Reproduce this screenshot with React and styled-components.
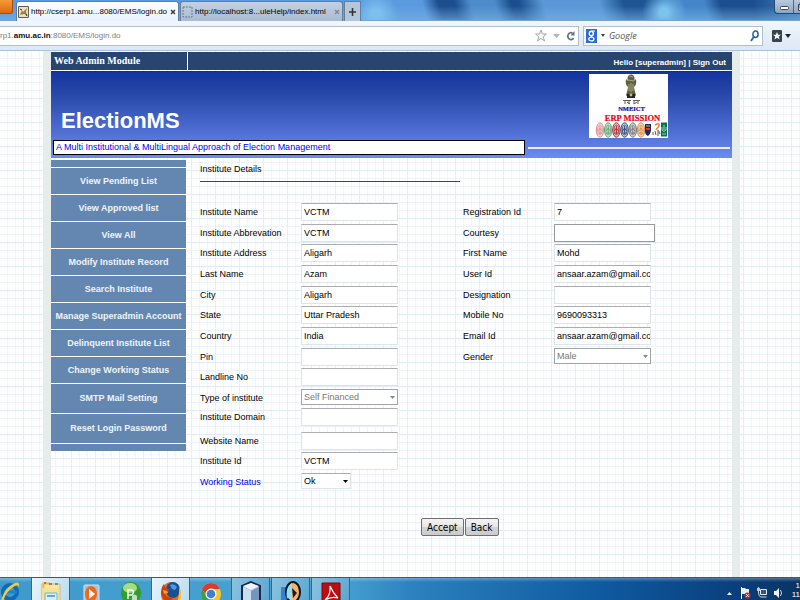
import React from "react";
import styled, { createGlobalStyle, css } from "styled-components";

const sans = '"Liberation Sans", Arial, sans-serif';

const Global = createGlobalStyle`
  *, *::before, *::after { box-sizing: border-box; }
  body { margin: 0; background: #fff; font-family: ${sans}; font-size: 9px; color: #000; }
  button, input, select { font: inherit; color: inherit; margin: 0; }
`;

const Screen = styled.div`
  display: flex;
  flex-direction: column;
  height: 100vh;
  overflow: hidden;
`;

/* ---------- browser window ---------- */

const TitleBar = styled.header`
  display: flex;
  flex: none;
  height: 21px;
  font-size: 8px;
  border-bottom: 1px solid #7aa2c8;
  background:
    radial-gradient(circle at 83% 60%, #7cc4f0 0 4px, transparent 22px),
    radial-gradient(circle at 47% 70%, #7cc0ef 0 4px, transparent 22px),
    linear-gradient(to bottom, transparent 30%, rgba(120, 180, 230, 0.6)),
    linear-gradient(75deg, transparent 53%, #1c4e8e 55% 57%, #4d8bcb 59% 62%, #1c4e8e 64% 65%, #5b97d6 68% 75%, #1e5494 78% 82%, #4386c9 85% 88%, #1c4e8e 90% 94%, #3f7fbf),
    #5b9ade;
`;

const AppButton = styled.button`
  width: 13px;
  height: 14px;
  margin-right: 3px;
  padding: 0;
  border: 1px solid #a94c10;
  border-width: 0 1px 1px 0;
  border-radius: 0 0 3px 0;
  background: linear-gradient(#f39a3a, #e06a08);
`;

const Tab = styled.div`
  display: flex;
  align-items: center;
  gap: 2px;
  width: 163px;
  height: 20px;
  margin: 1px 1px 0 0;
  padding: 0 1px;
  white-space: nowrap;
  border: 1px solid #5f7fa3;
  border-bottom: 0;
  border-radius: 3px 3px 0 0;
  background: ${(p) => (p.$active ? "linear-gradient(#fdfeff, #e9f2fb)" : "linear-gradient(#c3d0e0, #a8bcd4)")};
`;

const TabTitle = styled.span`
  flex: 1;
`;

const TabButton = styled.button`
  display: grid;
  place-items: center;
  width: ${(p) => p.$width || 8}px;
  padding: 0;
  border: 0;
  background: none;
`;

const NewTab = styled(TabButton)`
  height: 20px;
  margin-top: 1px;
  border: 1px solid #5f7fa3;
  border-bottom: 0;
  background: #b4c6da;
`;

const WindowButtons = styled.div`
  display: flex;
  height: 14px;
  width: 26px;
  margin-left: auto;
  overflow: hidden;
  border: 1px solid #26486f;
  border-width: 0 0 1px 1px;
  border-radius: 0 0 0 4px;
  background: linear-gradient(#b9cbdc, #8ba6c2);
`;

const WindowButton = styled.button`
  flex: none;
  width: 19px;
  height: 13px;
  padding: 0;
  border: 0;
  border-right: 1px solid #4a6788;
  background: none;
  svg { display: block; }
`;

const NavBar = styled.nav`
  display: flex;
  flex: none;
  align-items: center;
  gap: 4px;
  height: 30px;
  border-bottom: 1px solid #a9c3df;
  background: linear-gradient(#f0f6fc, #dbe8f5);
`;

const FieldBox = styled.div`
  display: flex;
  align-items: center;
  gap: 4px;
  height: 20px;
  background: #fff;
  border: 1px solid #b3bfcc;
`;

const Address = styled(FieldBox)`
  flex: 1;
  gap: 6px;
  padding-right: 3px;
  border-left: 0;
  color: #808080;
`;

const Url = styled.div`
  flex: 1;
  font-size: 8px;
  b { color: #111; }
`;

const SearchBox = styled(FieldBox)`
  width: 180px;
  padding: 0 3px 0 2px;
`;

const SearchInput = styled.input`
  flex: 1;
  min-width: 0;
  padding: 0;
  border: 0;
  outline: 0;
  font-family: "Open Sans", sans-serif;
  background: none;
  &::placeholder { color: #555; font-style: italic; opacity: 1; }
`;

const IconButton = styled.button`
  display: grid;
  flex: none;
  padding: 0;
  border: 0;
  background: none;
`;

const Bookmark = styled(IconButton)`
  width: 33px;
  padding-left: 4px;
`;

/* ---------- web page ---------- */

const Page = styled.main`
  flex: 1;
  min-height: 0;
  overflow: hidden;
  background:
    repeating-linear-gradient(to right, transparent 0 23px, #e6eefa 23px 24px),
    repeating-linear-gradient(to bottom, transparent 0 23px, #e0eafa 23px 24px),
    repeating-linear-gradient(to right, transparent 0 7px, #f0f4fc 7px 8px),
    repeating-linear-gradient(to bottom, transparent 0 7px, #ecf2fc 7px 8px),
    #fff;
`;

const Sheet = styled.div`
  min-height: 100%;
  margin: 0 60px 0 43px;
  padding-top: 1px;
  border: solid #e6ecea;
  border-width: 0 8px;
`;

const TopBar = styled.div`
  display: flex;
  align-items: center;
  height: 18px;
  font-weight: bold;
  color: #fff;
  background: #28456f;
`;

const ModuleName = styled.div`
  width: 137px;
  height: 18px;
  padding-left: 3px;
  font: bold 10px/18px "Liberation Serif", serif;
  border-right: 1px solid #fff;
`;

const Greeting = styled.div`
  margin-left: auto;
  padding: 2px 6px 0 0;
  font-size: 8px;
  a { color: inherit; text-decoration: none; }
`;

const Banner = styled.section`
  display: flex;
  flex-direction: column;
  height: 87px;
  margin-top: 1px;
  padding: 2px 2px 2px;
  background: linear-gradient(#1434a0, #2747a8 25%, #4765cb 60%, #6b8cf2);
  border-top: 1px solid #102d8c;
`;

const BannerTop = styled.div`
  display: flex;
  justify-content: space-between;
  align-items: flex-start;
  height: 66px;
  padding: 0 62px 0 8px;
`;

const Brand = styled.h1`
  align-self: flex-end;
  margin: 0;
  padding-bottom: 3px;
  color: #fff;
  font-size: 22px;
  line-height: 32px;
`;

const Logo = styled.svg`
  display: block;
  background: #fff;
`;

const BannerBottom = styled.div`
  display: flex;
  align-items: center;
  gap: 3px;
`;

const Tagline = styled.p`
  flex: 0 1 472px;
  margin: 0;
  padding-left: 2px;
  font-size: 9px;
  line-height: 13px;
  color: #00f;
  background: #fff;
  border: 1px solid #000;
`;

const Stripe = styled.span`
  flex: 1;
  height: 2px;
  background: #e8eefc;
`;

const Body = styled.div`
  display: flex;
  align-items: flex-start;
  gap: 13px;
`;

const Sidebar = styled.nav`
  display: flex;
  flex: none;
  flex-direction: column;
  gap: 1px;
  width: 136px;
  margin-top: 2px;
  padding-right: 1px;
  background: #fff;
`;

const Cap = styled.div`
  height: 7px;
  background: #6487b1;
`;

const MenuLink = styled.a`
  height: ${(p) => (p.$tall ? 29 : 26)}px;
  line-height: ${(p) => (p.$tall ? 29 : 26)}px;
  color: #eef4fb;
  font-weight: bold;
  text-align: center;
  text-decoration: none;
  white-space: nowrap;
  background: #6487b1;
`;

const Form = styled.form`
  flex: 1;
`;

const Legend = styled.h2`
  width: 260px;
  margin: 0 0 21px;
  padding: 2px 0 3px;
  font-size: 9px;
  font-weight: normal;
  line-height: 18px;
  border-bottom: 1px solid #444;
`;

const Columns = styled.div`
  display: flex;
  align-items: flex-start;
  gap: 65px;
`;

const Fields = styled.div`
  display: grid;
  grid-template-columns: ${(p) => (p.$wide ? "101px" : "91px")} auto;
  grid-template-rows: repeat(3, 21px 20px 21px) 19px 24px 20px 21px 21px;
  align-items: start;
  justify-items: start;
`;

const FieldLabel = styled.label`
  line-height: 18px;
  white-space: nowrap;
  color: ${(p) => (p.$link ? "#0000f0" : "#000")};
`;

const control = css`
  height: 18px;
  width: ${(p) => p.$width || 97}px;
  padding: 0 0 0 2px;
  border: 1px solid #dfe3ea;
  border-top-color: #abadb3;
  background: #fff;
`;

const TextInput = styled.input`
  ${control}
  ${(p) => p.$outlined && "border-color: #9a9a9a;"}
`;

const SelectWrap = styled.div`
  display: grid;
  align-items: center;
  justify-items: end;
  svg { grid-area: 1 / 1; margin-right: 3px; pointer-events: none; z-index: 1; }
`;

const Select = styled.select`
  ${control}
  grid-area: 1 / 1;
  height: 16px;
  appearance: none;
  opacity: 1;
  color: #000;
  &:disabled { color: #777; border-color: #a4a4a4; }
`;

const Actions = styled.div`
  display: flex;
  gap: 1px;
  margin: 24px 0 0 221px;
`;

const PushButton = styled.button`
  height: 18px;
  padding: 0 5px;
  font-family: "DejaVu Sans Condensed", "DejaVu Sans", sans-serif;
  font-size: 10px;
  border: 1px solid #707070;
  border-radius: 2px;
  background: linear-gradient(#f4f4f4, #e6e6e6 50%, #d4d4d4 50%, #cbcbcb);
`;

/* ---------- task bar ---------- */

const TaskBar = styled.footer`
  display: flex;
  flex: none;
  gap: 1px;
  height: 23px;
  overflow: hidden;
  border-top: 1px solid #40586e;
  background:
    linear-gradient(rgba(255, 255, 255, 0.3), transparent 4px),
    linear-gradient(to right, #3f9acb, #49a3d3 42%, #2b80bd 52%, #0f5aa0 75%, #0a3f7d 92%, #083463);
`;

const TaskButton = styled.button`
  flex: none;
  width: ${(p) => (p.$first ? 30 : 39)}px;
  height: 30px;
  padding: ${(p) => (p.$first ? "1px 0 0" : "2px 0 0 8px")};
  border: 1px solid ${(p) => (p.$open ? "#2d6a92" : "transparent")};
  border-top: 0;
  background: ${(p) =>
    p.$lit
      ? "linear-gradient(110deg, #e7f4fb, #b9dcef)"
      : p.$open
        ? "linear-gradient(110deg, #8cc3e0, #5ba5cf)"
        : "none"};
  svg { display: block; }
`;

const Tray = styled.div`
  display: flex;
  gap: 6px;
  width: 77px;
  margin-left: auto;
  padding-top: 9px;
  svg { flex: none; }
`;

const Clock = styled.div`
  flex: 1;
  margin: -6px 0 0 -3px;
  font-size: 8px;
  line-height: 9px;
  text-align: right;
  color: #fff;
`;

const Arrow = ({ color, small }) => (
  <svg width={small ? 5 : 7} height={small ? 3 : 4} viewBox="0 0 7 4" aria-hidden="true">
    <path d="M0 0h7L3.500 4z" fill={color} />
  </svg>
);

const Cross = ({ color }) => (
  <svg width="6" height="6" viewBox="0 0 6 6" aria-hidden="true">
    <path d="M1 1l4 4M5 1L1 5" stroke={color} strokeWidth="1.300" />
  </svg>
);

const seals = ["#dc8f90", "#60a573", "#ad3438", "#394e79", "#797979", "#dd8e42"];

const MissionLogo = () => (
  <Logo width="79" height="64" viewBox="0 0 79 64" role="img" aria-label="NMEICT ERP Mission">
    <g fill="#62613f">
      <ellipse cx="42" cy="5" rx="3.500" ry="4.500" />
      <path d="M37 5q-1 6 2 8l-1 5h8l-1-5q3-2 2-8l-3 3h-4zM38 18h8l1 3-2 3h-6l-2-3z" />
    </g>
    <path d="M40 2l4 1M39 6l6 1M40 10v7M42 9v9M44 10v7" stroke="#c8c4a0" strokeWidth="0.700" />
    <path d="M38 20h8v4h-8z" fill="#24251a" />
    <circle cx="42" cy="21" r="1.400" fill="#bdb995" />
    <path d="M34 26.500h8M44 26.500h7M36 27v3M38 28l3 2M40 27v3M45 27v3l3-2M49 27v3" stroke="#333" strokeWidth="0.800" fill="none" />
    <text x="42.500" y="37" textAnchor="middle" fontFamily="Liberation Serif, serif" fontWeight="bold" fontSize="6.500" fill="#12129a" stroke="#12129a" strokeWidth="0.200">NMEICT</text>
    <text x="43.500" y="46.500" textAnchor="middle" fontFamily="Liberation Serif, serif" fontWeight="bold" fontSize="8.500" fill="#f00012" stroke="#f00012" strokeWidth="0.200">ERP MISSION</text>
    {seals.map((c, i) => (
      <g key={c} transform={`translate(${11 + i * 8.2} 56)`} fill="none" stroke={c}>
        <ellipse rx="3.700" ry="7.200" fill={c} fillOpacity="0.300" />
        <ellipse rx="2.300" ry="4.800" strokeWidth="0.800" />
        <path d="M0-4v8M-2 1L0-2l2 3M-2 3h4" />
      </g>
    ))}
    <path d="M56 50h6v7q-1 4-3 5-3-1-3-5z" fill="#22265f" />
    <path d="M57 55h4" stroke="#e03a2a" strokeWidth="2" />
    <path d="M57 52h4" stroke="#d9b238" />
    <path d="M66 51q5-3 4 1l-3 4" stroke="#f07c3a" strokeWidth="1.500" fill="none" />
    <path d="M64 58v3M66 57l1 4M69 57v5" stroke="#556" />
    <path d="M69 56l2 4" stroke="#46a45b" strokeWidth="1.500" />
    <path d="M72 48.500h6v14h-6z" fill="#08744c" />
    <path d="M73 53v3q2 3 4 0v-3M75 51v5M73 60h4" stroke="#d2eadf" fill="none" strokeWidth="0.800" />
  </Logo>
);

const icons = {
  ie: (
    <svg width="20" height="26" viewBox="0 0 20 26">
      <circle cx="9" cy="12" r="7" fill="none" stroke="#116ab4" strokeWidth="4" />
      <path d="M3 12h13" stroke="#1b83cd" strokeWidth="3" />
      <path d="M0 21Q3 8 14 3q5-2 4 4-1-4-7 1Q4 13 2 22z" fill="#f5ca3b" />
    </svg>
  ),
  folder: (
    <svg width="22" height="26" viewBox="0 0 22 26">
      <path d="M1 3l2-2h6l2 2h9v20H1z" fill="#e9ca72" />
      <path d="M4 3h16v20H4z" fill="#f7e7a6" stroke="#c5a34d" strokeWidth="0.600" />
      <path d="M2 7h17v16H2z" fill="#f7e294" />
      <path d="M5 12h12v12H5z" fill="#d8eefa" stroke="#6eb3dc" />
      <path d="M7 15h8" stroke="#3b8ec9" strokeWidth="1.500" />
      <path d="M4 2h2M9 3h3" stroke="#cf3f32" strokeWidth="1.500" />
      <path d="M15 3h3" stroke="#3c7ad0" strokeWidth="1.500" />
    </svg>
  ),
  player: (
    <svg width="22" height="26" viewBox="0 0 22 26">
      <rect x="4" y="4" width="15" height="20" rx="1" fill="#9fc5dd" stroke="#d0e4ef" />
      <ellipse cx="11" cy="13" rx="6" ry="8" fill="#ee681d" />
      <path d="M9 8l6 5-6 5z" fill="#fff" />
    </svg>
  ),
  green: (
    <svg width="22" height="26" viewBox="0 0 22 26">
      <ellipse cx="11" cy="12" rx="10" ry="11" fill="#2f9d33" />
      <ellipse cx="10" cy="7" rx="7" ry="5" fill="#a9db82" />
      <path d="M8 18V9h4q3 2 0 5H8" fill="none" stroke="#f3fbf0" strokeWidth="1.500" />
      <path d="M12 15q3-3 5 0v4h-5z" fill="#c8dcc2" />
    </svg>
  ),
  firefox: (
    <svg width="22" height="26" viewBox="0 0 22 26">
      <ellipse cx="11" cy="13" rx="10" ry="12" fill="#e46a12" />
      <ellipse cx="13" cy="9" rx="7" ry="8" fill="#1a4f96" />
      <path d="M10 4q4-2 7 2l-2 3-3-1z" fill="#4a9bdd" />
      <path d="M19 5q4 9 0 18l-4 3q5-9 4-21z" fill="#f7c52e" />
      <path d="M1 13Q1 6 4 3l1 4 4 1-1 4-3 1q2 5 8 3-2 6-8 4z" fill="#c9400c" />
      <path d="M3 9l4 1 1 2-4 1z" fill="#f5a12f" />
    </svg>
  ),
  chrome: (
    <svg width="22" height="26" viewBox="0 0 22 26">
      <ellipse cx="11" cy="13" rx="10" ry="11" fill="#f4c827" />
      <path d="M2 8Q5 2 11 2t9 6h-9l-5 6z" fill="#d93b30" />
      <path d="M2 8Q0 13 2 18q3 5 8 6l3-6-6-2z" fill="#36a14a" />
      <circle cx="11" cy="13" r="5.500" fill="#fff" />
      <circle cx="11" cy="13" r="4.300" fill="#3f7fd0" />
    </svg>
  ),
  cube: (
    <svg width="22" height="26" viewBox="0 0 22 26">
      <path d="M2 5l9-4 9 4v16l-9 5-9-5z" fill="#a8c5e5" stroke="#1a2750" strokeWidth="2" />
      <path d="M3 6l8 4v15l-8-4z" fill="#c8def1" />
      <path d="M19 6l-8 4v15l8-4z" fill="#7595be" />
      <path d="M3 5l8-3 8 3-8 4z" fill="#edf5fc" />
    </svg>
  ),
  lens: (
    <svg width="22" height="26" viewBox="0 0 22 26">
      <path d="M1 6h8v18H1z" fill="#3185d0" />
      <ellipse cx="13" cy="11" rx="7" ry="10" fill="#f2b272" stroke="#10141b" strokeWidth="2" />
      <path d="M12 2q-7 5-5 15l5 3z" fill="#8fe0f5" />
      <path d="M12 7l5 5-4 5z" fill="#2b1711" />
      <path d="M4 22l5-4" stroke="#10141b" strokeWidth="2" />
    </svg>
  ),
  acrobat: (
    <svg width="22" height="26" viewBox="0 0 22 26">
      <path d="M2 2h18v24H2z" fill="#b90f12" stroke="#7e090b" />
      <path d="M10 5q3 7 8 12-6-2-13 2 6-5 5-14z" fill="none" stroke="#fff" strokeWidth="1.200" />
    </svg>
  ),
};

const tasks = [
  { id: "ie", label: "Internet Explorer", first: true },
  { id: "folder", label: "Windows Explorer", open: true, lit: true },
  { id: "player", label: "Media Player" },
  { id: "green", label: "Messenger" },
  { id: "firefox", label: "Firefox", open: true, lit: true },
  { id: "chrome", label: "Chrome" },
  { id: "cube", label: "VirtualBox", open: true },
  { id: "lens", label: "Image Viewer", open: true },
  { id: "acrobat", label: "Acrobat", open: true },
];

const menu = [
  "View Pending List",
  "View Approved list",
  "View All",
  "Modify Institute Record",
  "Search Institute",
  "Manage Superadmin Account",
  "Delinquent Institute List",
  "Change Working Status",
  "SMTP Mail Setting",
  "Reset Login Password",
];

const left = [
  { label: "Institute Name", value: "VCTM" },
  { label: "Institute Abbrevation", value: "VCTM" },
  { label: "Institute Address", value: "Aligarh" },
  { label: "Last Name", value: "Azam" },
  { label: "City", value: "Aligarh" },
  { label: "State", value: "Uttar Pradesh" },
  { label: "Country", value: "India" },
  { label: "Pin", value: "" },
  { label: "Landline No", value: "" },
  { label: "Type of institute", value: "Self Financed", select: true, disabled: true },
  { label: "Institute Domain", value: "" },
  { label: "Website Name", value: "" },
  { label: "Institute Id", value: "VCTM" },
  { label: "Working Status", value: "Ok", select: true, width: 50, link: true },
];

const right = [
  { label: "Registration Id", value: "7" },
  { label: "Courtesy", value: "", width: 101, outlined: true },
  { label: "First Name", value: "Mohd" },
  { label: "User Id", value: "ansaar.azam@gmail.co" },
  { label: "Designation", value: "" },
  { label: "Mobile No", value: "9690093313" },
  { label: "Email Id", value: "ansaar.azam@gmail.co" },
  { label: "Gender", value: "Male", select: true, disabled: true },
];

const Field = ({ label, value, select, disabled, width, outlined, link }) => {
  const id = label.toLowerCase().replace(/ /g, "-");
  return (
    <>
      <FieldLabel htmlFor={id} $link={link}>{label}</FieldLabel>
      {select ? (
        <SelectWrap>
          <Select id={id} disabled={disabled} $width={width} defaultValue={value}>
            <option>{value}</option>
          </Select>
          <Arrow small color={disabled ? "#888" : "#000"} />
        </SelectWrap>
      ) : (
        <TextInput id={id} defaultValue={value} $width={width} $outlined={outlined} />
      )}
    </>
  );
};

export default function App() {
  return (
    <Screen>
      <Global />
      <TitleBar>
        <AppButton aria-label="Firefox menu" />
        <Tab $active>
          <svg width="11" height="12" viewBox="0 0 11 12" aria-hidden="true">
            <path d="M.5.5h10v11H.5z" fill="#e9e3d0" stroke="#5b5b52" />
            <path d="M2 9l2-5 1 2 4-4-1 4 1 3-3-1z" fill="#a87e26" />
            <path d="M2 3l2 1M8 8l1 2" stroke="#222" />
          </svg>
          <TabTitle>http://cserp1.amu...8080/EMS/login.do</TabTitle>
          <TabButton aria-label="Close tab"><Cross color="#333" /></TabButton>
        </Tab>
        <Tab>
          <svg width="11" height="12" viewBox="0 0 11 12" aria-hidden="true">
            <path d="M1 1h9v10H1z" fill="none" stroke="#69788a" strokeDasharray="2 1" />
          </svg>
          <TabTitle>http://localhost:8...uleHelp/index.html</TabTitle>
          <TabButton aria-label="Close tab"><Cross color="#7b8796" /></TabButton>
        </Tab>
        <NewTab $width={17} aria-label="New tab">
          <svg width="7" height="8" viewBox="0 0 7 8"><path d="M3.500 0v8M0 4h7" stroke="#333" strokeWidth="1.500" /></svg>
        </NewTab>
        <WindowButtons>
          <WindowButton aria-label="Minimize">
            <svg width="18" height="13" viewBox="0 0 18 13"><rect x="5.500" y="6.500" width="8" height="3" rx="1" fill="#fff" stroke="#445" /></svg>
          </WindowButton>
          <WindowButton aria-label="Restore">
            <svg width="18" height="13" viewBox="0 0 18 13"><path d="M6 2.500h8v6H6zM4.500 4.500h7v6h-7z" fill="#fff" stroke="#445" /></svg>
          </WindowButton>
        </WindowButtons>
      </TitleBar>

      <NavBar>
        <Address>
          <Url role="textbox" aria-label="Address">rp1.<b>amu.ac.in</b>:8080/EMS/login.do</Url>
          <IconButton aria-label="Bookmark this page">
            <svg width="12" height="13" viewBox="0 0 12 13"><path d="M6 1l1.500 4h3.900L8.200 7.700 9.500 12 6 9.400 2.500 12l1.300-4.300L.6 5h3.900z" fill="#fafafa" stroke="#a2a7ac" /></svg>
          </IconButton>
          <Arrow color="#b1b6bd" />
          <IconButton aria-label="Reload">
            <svg width="9" height="11" viewBox="0 0 9 11"><path d="M6.500 3.200A3 3.500 0 1 0 7.500 8" fill="none" stroke="#65717f" strokeWidth="1.700" /><path d="M8.500 1v4.500H4.500z" fill="#65717f" /></svg>
          </IconButton>
        </Address>
        <SearchBox>
          <svg width="11" height="14" viewBox="0 0 11 14" aria-hidden="true">
            <rect width="11" height="14" fill="#2a6ae0" />
            <ellipse cx="5.300" cy="4.500" rx="2" ry="2.200" fill="none" stroke="#fff" strokeWidth="1.400" />
            <ellipse cx="5.300" cy="10" rx="2.600" ry="1.900" fill="none" stroke="#fff" strokeWidth="1.300" />
            <path d="M6 2h3M5 6.500l1 2" stroke="#fff" />
          </svg>
          <svg width="4" height="3" viewBox="0 0 4 3" aria-hidden="true"><path d="M0 0h4L2 3z" fill="#444" /></svg>
          <SearchInput placeholder="Google" aria-label="Search with Google" />
          <IconButton aria-label="Search">
            <svg width="9" height="12" viewBox="0 0 9 12"><ellipse cx="5.500" cy="4.200" rx="2.600" ry="3.200" fill="none" stroke="#2464a4" strokeWidth="1.500" /><path d="M3.800 6.800L1 11" stroke="#2464a4" strokeWidth="1.800" /></svg>
          </IconButton>
        </SearchBox>
        <Bookmark aria-label="Bookmarks">
          <svg width="20" height="12" viewBox="0 0 20 12">
            <rect x="1" width="10" height="12" rx="1" fill="#37434f" />
            <path d="M6 2l1.100 2.700H10L7.700 6.500l.9 3L6 7.800 3.400 9.500l.9-3L2 4.700h2.900z" fill="#fff" />
            <path d="M14 4h6l-3 4z" fill="#222" />
          </svg>
        </Bookmark>
      </NavBar>

      <Page>
        <Sheet>
          <TopBar>
            <ModuleName>Web Admin Module</ModuleName>
            <Greeting>Hello [superadmin] | <a href="#signout">Sign Out</a></Greeting>
          </TopBar>
          <Banner>
            <BannerTop>
              <Brand>ElectionMS</Brand>
              <MissionLogo />
            </BannerTop>
            <BannerBottom>
              <Tagline>A Multi Institutional &amp; MultiLingual Approach of Election Management</Tagline>
              <Stripe />
            </BannerBottom>
          </Banner>
          <Body>
            <Sidebar>
              <Cap />
              {menu.map((name, i) => (
                <MenuLink key={name} href="#menu" $tall={i > 7}>{name}</MenuLink>
              ))}
              <Cap />
            </Sidebar>
            <Form>
              <Legend>Institute Details</Legend>
              <Columns>
                <Fields $wide>{left.map((f) => <Field key={f.label} {...f} />)}</Fields>
                <Fields>{right.map((f) => <Field key={f.label} {...f} />)}</Fields>
              </Columns>
              <Actions>
                <PushButton type="button">Accept</PushButton>
                <PushButton type="button">Back</PushButton>
              </Actions>
            </Form>
          </Body>
        </Sheet>
      </Page>

      <TaskBar>
        {tasks.map((t) => (
          <TaskButton key={t.id} aria-label={t.label} $first={t.first} $open={t.open} $lit={t.lit}>
            {icons[t.id]}
          </TaskButton>
        ))}
        <Tray>
          <svg width="11" height="11" viewBox="0 0 11 11" aria-hidden="true"><path d="M4 6h5L6.500 3z" transform="translate(0 2)" fill="#eef" /></svg>
          <svg width="11" height="12" viewBox="0 0 11 12" aria-hidden="true">
            <path d="M1.500 0v12" stroke="#fff" /><path d="M2 1h3l1 1h3v5H2z" fill="#e8ebef" />
            <circle cx="7.500" cy="8.500" r="3" fill="#d7261f" /><path d="M6.300 7.300l2.400 2.400M8.700 7.300L6.300 9.700" stroke="#fff" />
          </svg>
          <svg width="11" height="12" viewBox="0 0 11 12" aria-hidden="true">
            <path d="M3.500 2.500h6v5h-6z" fill="#31557e" stroke="#e6ebf0" /><path d="M1.500 0v5q0 4 2 5h6" fill="none" stroke="#cdd5dc" /><path d="M0 1h3v3H0z" fill="#ccc8a8" />
          </svg>
          <svg width="9" height="12" viewBox="0 0 9 12" aria-hidden="true">
            <path d="M0 4h2l3-3v10L2 8H0z" fill="#eef1f4" /><path d="M6.500 3q2 3 0 6" fill="none" stroke="#cdd7e2" />
          </svg>
          <Clock>1<br />11</Clock>
        </Tray>
      </TaskBar>
    </Screen>
  );
}
